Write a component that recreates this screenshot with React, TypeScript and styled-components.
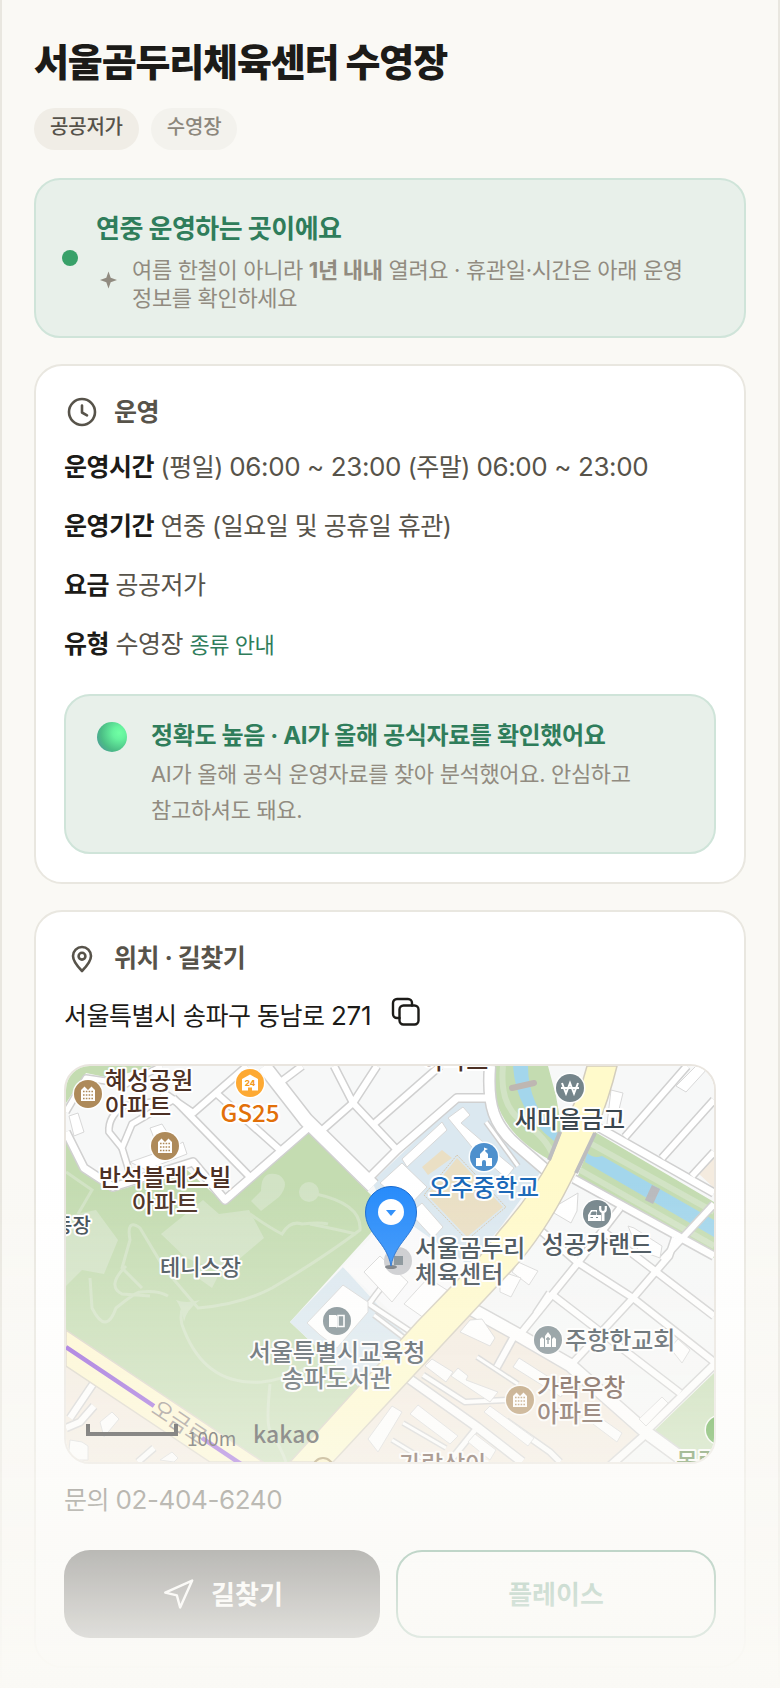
import React from 'react';
import styled, { createGlobalStyle } from 'styled-components';

const GlobalStyle = createGlobalStyle`
  *, *::before, *::after { box-sizing: border-box; }
  body {
    margin: 0;
    background: #faf9f5;
    color: #1c1b18;
    font-family: Inter, "Noto Sans CJK KR", sans-serif;
    font-size: 25px;
    letter-spacing: -0.02em;
    word-break: keep-all;
  }
  h1, h2, p, ul { margin: 0; padding: 0; font-size: inherit; }
  ul { list-style: none; }
  button { font-family: inherit; cursor: pointer; }
`;

const Page = styled.main`
  min-height: 100vh;
  padding: 38px 32px 18px;
  border: solid #e9e7e0;
  border-width: 0 2px;
`;

const Title = styled.h1`
  font-size: 38px;
  line-height: 48px;
  font-weight: 800;
  letter-spacing: -0.03em;
`;

const Chips = styled.ul`
  display: flex;
  gap: 12px;
  margin: 22px 0 28px;
`;

const Chip = styled.li<{ $soft?: boolean }>`
  padding: 4px 16px 8px;
  border-radius: 21px;
  font-size: 20px;
  line-height: 30px;
  font-weight: 500;
  letter-spacing: -0.01em;
  color: ${(p) => (p.$soft ? '#8c877c' : '#56524a')};
  background: ${(p) => (p.$soft ? '#f3f2ed' : '#f0ede6')};
`;

const Notice = styled.section`
  display: flex;
  align-items: center;
  gap: 18px;
  padding: 24px 26px;
  border: 2px solid #cfe4d9;
  border-radius: 26px;
  background: #e8f0ea;
`;

const Dot = styled.span`
  flex: none;
  width: 16px;
  height: 16px;
  border-radius: 50%;
  background: #38a169;
`;

const NoticeTitle = styled.p`
  margin-bottom: 2px;
  font-size: 26px;
  line-height: 50px;
  font-weight: 700;
  color: #2f7d5b;
`;

const NoticeText = styled.div`
  display: flex;
  gap: 12px;
  font-size: 22px;
  line-height: 28px;
  letter-spacing: -0.015em;
  color: #918b80;
  svg { flex: none; margin-top: 12px; }
`;

const Card = styled.section`
  margin-top: 26px;
  padding: 28px;
  border: 2px solid #e9e7e0;
  border-radius: 28px;
  background: #fff;
`;

const CardTitle = styled.h2`
  display: flex;
  align-items: center;
  gap: 14px;
  line-height: 36px;
  font-weight: 700;
  color: #57534a;
`;

const Facts = styled.ul`
  display: flex;
  flex-direction: column;
  gap: 20px;
  margin: 18px 0 29px;
  line-height: 39px;
  color: #57534a;
  b { color: #1c1b18; }
`;

/* Figures are set slightly larger than the Hangul around them. */
const Figures = styled.span`
  font-size: 26px;
  line-height: 1;
  letter-spacing: -0.015em;
`;

const GuideLink = styled.a`
  font-size: 22px;
  color: #2f7d5b;
  text-decoration: none;
`;

const Accuracy = styled.div`
  display: flex;
  gap: 24px;
  padding: 22px 31px 24px;
  border: 2px solid #cfe4d9;
  border-radius: 26px;
  background: #e8f0ea;
  line-height: 36px;
`;

const Ball = styled.span`
  flex: none;
  width: 30px;
  height: 30px;
  margin-top: 4px;
  border-radius: 50%;
  background: radial-gradient(circle at 74% 36%, #70ffa4 0%, #66f29e 22%, #4bbd85 62%, #4f95a0 92%);
`;

const AccuracyTitle = styled.p`
  margin-bottom: 2px;
  font-size: 24px;
  font-weight: 700;
  letter-spacing: -0.015em;
  color: #2f7d5b;
`;

const AccuracyText = styled.p`
  font-size: 22px;
  letter-spacing: -0.015em;
  color: #918b80;
`;

const Address = styled.div`
  display: flex;
  align-items: center;
  gap: 20px;
  margin: 20px 0 28px;
  line-height: 40px;
`;

const CopyButton = styled.button`
  display: flex;
  padding: 0 0 8px;
  border: 0;
  background: none;
  color: #1c1b18;
`;

const MapFrame = styled.div`
  height: 400px;
  overflow: hidden;
  border: 2px solid #e9e5df;
  border-radius: 26px;
  svg { display: block; width: 100%; height: 100%; }
`;

const Phone = styled.p`
  margin: 16px 0 30px;
  line-height: 40px;
  color: #57534a;
`;

const Actions = styled.div`
  display: flex;
  gap: 16px;
`;

const Action = styled.button<{ $primary?: boolean }>`
  flex: 1 1 0;
  display: flex;
  align-items: center;
  justify-content: center;
  gap: 16px;
  height: 88px;
  padding: 0;
  border: ${(p) => (p.$primary ? '0' : '2px solid #2f7d5b')};
  border-radius: 26px;
  font-size: 26px;
  font-weight: 700;
  color: ${(p) => (p.$primary ? '#fff' : '#2f7d5b')};
  background: ${(p) => (p.$primary ? '#1c1b18' : '#fff')};
`;

const ActionLabel = styled.span`
  padding-bottom: 4px;
`;

const BottomFade = styled.div`
  position: fixed;
  inset: auto 0 0;
  height: 30vh;
  pointer-events: none;
  background: linear-gradient(rgba(250, 249, 245, 0), rgba(250, 249, 245, 0.98));
`;

const ClockIcon = () => (
  <svg width="36" height="36" viewBox="0 0 36 36" fill="none" stroke="currentColor" strokeWidth="2.6" strokeLinecap="round" strokeLinejoin="round" aria-hidden="true">
    <circle cx="18" cy="18" r="13" />
    <path d="M18 11.5v7l5 2.8" />
  </svg>
);

const PlaceIcon = () => (
  <svg width="36" height="36" viewBox="0 0 36 36" fill="none" stroke="currentColor" strokeWidth="2.6" strokeLinejoin="round" aria-hidden="true">
    <path d="M18 31c-4.200-4.300-9-9.300-9-15a9 9 0 0 1 18 0c0 5.700-4.800 10.700-9 15z" />
    <circle cx="18" cy="16.200" r="3.400" />
  </svg>
);

const SparkIcon = () => (
  <svg width="24" height="24" viewBox="0 0 24 24" fill="currentColor" aria-hidden="true">
    <path d="M12.500 3.500l2.200 6.300 6.300 2.200-6.300 2.200-2.200 6.300-2.200-6.300-6.300-2.200 6.300-2.200z" />
  </svg>
);

const CopyIcon = () => (
  <svg width="30" height="30" viewBox="0 0 30 30" fill="none" stroke="currentColor" strokeWidth="2.400" strokeLinecap="round" strokeLinejoin="round" aria-hidden="true">
    <rect x="8.500" y="8.500" width="19" height="19" rx="4" />
    <path d="M8.500 21H6a4 4 0 0 1-4-4V6a4 4 0 0 1 4-4h11a4 4 0 0 1 4 4v2.500" />
  </svg>
);

const NavigateIcon = () => (
  <svg width="34" height="34" viewBox="0 0 24 24" fill="none" stroke="currentColor" strokeWidth="1.700" strokeLinejoin="round" aria-hidden="true">
    <path d="M3 11 22 2.500 13.500 21.500 11.200 13z" />
  </svg>
);

/* Street centre lines with their widths. */
const streets: [string, number][] = [
  ['M198 0 L240 54 L307 120', 13],
  ['M244 60 L159 134 L127 96 L47 121 L18 102 L0 66', 7],
  ['M0 46 L20 12 L60 18 L96 0', 5],
  ['M107 32 L184 111', 6],
  ['M96 26 L127 47 L181 0', 6],
  ['M150 27 L214 84', 6],
  ['M212 18 L236 0', 6],
  ['M107 34 L66 58 L56 82 L64 108', 5],
  ['M100 34 L58 40 Q42 50 43 66 L56 82', 5],
  ['M268 0 L287 37 L331 84', 6],
  ['M311 0 L287 37 L254 66', 6],
  ['M374 0 L309 57', 6],
  ['M301 114 L331 84 L391 32 L424 32', 7],
  ['M424 0 C421 40 428 60 452 80 L480 104', 10],
  ['M420 56 L452 100', 3],
  ['M530 60 L648 127', 7],
  ['M508 113 L648 190', 7],
  ['M559 71 L621 0', 6],
  ['M596 92 L648 34', 6],
  ['M626 110 L648 86', 6],
  ['M400 240 L447 266 L504 299 L581 367 L626 400', 12],
  ['M456 266 L511 198 L554 142', 6],
  ['M504 300 L567 232 L603 190 L609 172', 6],
  ['M474 164 L511 196 L567 232 L652 299', 6],
  ['M484 227 L614 327', 6],
  ['M470 248 L484 227', 6],
  ['M534 163 L584 201 L648 250', 6],
  ['M652 295 L581 364', 7],
  ['M596 194 L648 138', 6],
  ['M581 367 L544 400', 7],
  ['M345 266 L303 238 Q330 200 336 208', 4],
  ['M342 312 L411 361 L456 396', 8],
  ['M357 309 L399 336 L441 334', 4],
  ['M409 364 L380 400', 5],
  ['M447 272 L431 301', 6],
  ['M411 291 L452 318', 3],
  ['M440 355 L484 386 L494 396', 5],
  ['M337 357 L380 382', 3],
  ['M326 374 L362 396', 3],
  ['M308 249 L346 278', 3],
  ['M27 318 L4 352 M0 362 L14 356 L28 340', 6],
  ['M72 396 L88 382', 5],
];

const buildings = [
  '336,93 376,56 381,64 341,101',
  '314,117 336,97 361,121 342,141',
  '356,137 377,161 367,172 344,147',
  '382,52 397,41 404,49 395,57 424,82 448,102 440,112 410,86',
  '277,219 302,236 302,246 271,282 254,269 241,257',
  '3,50 12,47 18,66 8,70',
  '84,62 96,58 101,66 88,72',
  '64,96 110,80 117,76 121,88 80,104',
  '545,24 557,27 549,60 541,58',
  '610,20 630,0 642,2 620,26',
  '490,140 512,127 511,145 505,157 488,147',
  '562,160 568,162 596,180 594,192 572,184',
  '452,196 472,205 463,219 446,206',
  '434,205 455,212 445,231 434,226',
  '394,266 404,254 416,253 429,272 424,280',
  '298,206 314,190 342,216 326,236',
  '338,238 362,212 384,226 358,252',
  '359,300 366,293 387,306 380,316',
  '385,310 392,302 402,310 400,314 432,326 424,336',
  '344,348 352,339 392,370 384,378',
  '302,373 326,340 336,346 312,386',
  '447,301 453,292 500,322 495,331',
  '527,358 532,350 556,367 551,376',
  '418,346 424,340 468,372 462,380',
  '573,353 596,331 602,337 580,360',
  '604,282 612,273 624,284 616,297',
  '402,376 409,368 430,384 424,394',
  '34,356 46,346 53,353 38,371',
  '94,394 106,386 112,392 108,396',
  '4,374 16,376 22,380 22,394 2,394',
];

const ParkPaths = () => (
  <>
    <g fill="#d2e3c5">
      <path d="M95 168l42-34 16 14 30-4 15 28-40 34-38-14zM0 150l30-6 22 30-14 34-22-4-16 16z" />
      <circle cx="243" cy="126" r="10" />
      <path d="M195 125q0-22 18-16 12 8 0 22l-18 14-10-10z" />
      <path d="M132 212l22-6-8 16z" />
    </g>
    <g fill="none" stroke="#d2e3c5" strokeWidth="3">
      <path d="M0 106l26 18-14 24M184 148q20 14 32 20 8-14 20-10 18-2 26 0M250 128q46 10 44 36-40 30-88 58-30 16-74 20l-34-40-24-40q-14-10-10 12l-8 28 20 20" />
      <path d="M24 212l2 30q14 28 24 0 20-16 24-16 18-2 28 4M60 200q-20 20-4 28l28 2" />
      <path d="M118 238q-6 14 0 26 22 56 78 52 20-2 44-14M204 318q-4 40 0 46 12 20 16 32M244 158q30 6 46 10" />
    </g>
    <path d="M110 234q10 4 24 0-14 10-16 22-2-14-8-22z" fill="#d2e3c5" />
  </>
);

type PoiProps = { x: number; y: number; color: string; children?: React.ReactNode };
const Poi = ({ x, y, color, children }: PoiProps) => (
  <g transform={`translate(${x} ${y})`}>
    <circle r="15.500" fill="#fff" opacity="0.9" />
    <circle r="14" fill={color} />
    <g fill="#fff">{children}</g>
  </g>
);

const Apartment = ({ x, y }: { x: number; y: number }) => (
  <Poi x={x} y={y} color="#ae8a5a">
    <path d="M-7 7V-4l3.500-3.500L0-4l3.500-3.500L7-4V7z" />
    <path d="M-5-2.500H5M-5 1H5M-5 4.500H5" stroke="#ae8a5a" strokeWidth="1.600" strokeDasharray="1.600 1.200" />
  </Poi>
);

type LabelProps = { x: number; y: number; lines: string[]; color?: string; size?: number; middle?: boolean };
const Label = ({ x, y, lines, color = '#3b474f', size = 24, middle }: LabelProps) => (
  <text y={y} fill={color} fontSize={size} textAnchor={middle ? 'middle' : 'start'}>
    {lines.map((line, i) => (
      <tspan key={line} x={x} dy={i ? 26 : 0}>{line}</tspan>
    ))}
  </text>
);

const BROWN = '#4c3024';

const LocationMap = () => (
  <svg viewBox="0 0 648 396" preserveAspectRatio="xMidYMid slice" role="img" aria-label="서울곰두리체육센터 지도">
    <rect width="648" height="396" fill="#f7f8f8" />
    <path d="M411 241L447 272 514 307 572 369 556 396H267L334 324zM0 300L27 317 144 396H0zM648 92l-16 15 16 15z" fill="#f4ebdf" />
    <path d="M0 0H87L44 12 20 7 0 37z" fill="#c4dcb1" />
    <path d="M0 74L16 104 46 126 121 104 159 138 242 66 307 131 311 160 224 256 294 322 229 396H197L0 264z" fill="#c4dcb1" />
    <ParkPaths />
    <path d="M648 307L589 364 621 394 648 396z" fill="#c4dcb1" />
    <path d="M306 116L391 35H421L440 74 476 104 434 162 405 196H370L312 128zM277 201L341 271 294 322 224 256z" fill="#dbe8f0" />
    <path d="M277 201L318 158 330 148 404 200 344 264z" fill="#fafafb" />
    <path d="M428 0H482L490 30 496 64 484 94Q440 70 430 34zM529 66L648 136V192L511 112z" fill="#c4dcb1" />
    <path d="M437 0q-4 40 20 56t30 34M522 76l126 70M514 104l134 76" fill="none" stroke="#d2e3c5" strokeWidth="6" />
    <path d="M447 0H462Q462 40 492 67L488 75Q450 46 447 0zM521 87Q528 93 536 90L648 154V171L519 96z" fill="#a3d6ec" />
    {streets.map(([d, w]) => (
      <path key={d} d={d} fill="none" stroke="#d0d0d0" strokeWidth={w + 3} strokeLinejoin="round" />
    ))}
    {streets.map(([d, w]) => (
      <path key={d} d={d} fill="none" stroke="#fff" strokeWidth={w} strokeLinejoin="round" />
    ))}
    {buildings.map((points) => (
      <polygon key={points} points={points} fill="#fff" stroke="#d8d8d8" />
    ))}
    <path d="M391 92L437 141 401 171 361 129zM376 84L386 92 362 109 356 101z" fill="#eadfc4" />
    <path d="M391 89L440 141 401 174 358 129z" fill="none" stroke="#d8c8ae" strokeDasharray="2 1" />
    <path d="M0 264L197 396H144L0 300z" fill="#fff8cf" stroke="#d8d2c4" strokeWidth="1.500" />
    <path d="M0 281L88 340M136 372L175 398" stroke="#9258da" strokeWidth="4.500" />
    <path d="M521 0H551C545 25 538 45 529 67L504 117C490 145 470 178 446 204L334 324 267 396H224L351 256 411 194 434 164C455 140 470 120 484 94L496 64C508 40 516 20 521 0z" fill="#fffacb" stroke="#d3cdbd" strokeWidth="1.500" />
    <path d="M494 66L483 94M529 67L510 107" stroke="#bdbdbf" strokeWidth="4" />
    <path d="M590 121L583 136" stroke="#b9babd" strokeWidth="9" />
    <path d="M446 22L468 17" stroke="#beb7b2" strokeWidth="6" strokeLinecap="round" />

    <g fontFamily='"Noto Sans CJK KR", sans-serif' fontWeight="500" letterSpacing="0" stroke="#fff" strokeWidth="4" strokeLinejoin="round" paintOrder="stroke">
      <text x="84" y="346" fontSize="22" fontWeight="400" fill="#8b817c" stroke="none" transform="rotate(34 84 346)">오금로</text>
      <Label x={39} y={23} lines={['혜성공원', '아파트']} color={BROWN} />
      <Label x={99} y={120} lines={['반석블레스빌', '아파트']} color={BROWN} middle />
      <Label x={184} y={56} lines={['GS25']} color="#e2700a" middle />
      <Label x={-12} y={167} lines={['동장']} size={20} />
      <Label x={94} y={209} lines={['테니스장']} size={22} />
      <Label x={356} y={3} lines={['아파트']} color={BROWN} />
      <Label x={418} y={130} lines={['오주중학교']} color="#1a68b8" middle />
      <Label x={349} y={191} lines={['서울곰두리', '체육센터']} />
      <Label x={504} y={62} lines={['새마을금고']} middle />
      <Label x={531} y={187} lines={['성공카랜드']} middle />
      <Label x={271} y={295} lines={['서울특별시교육청', '송파도서관']} middle />
      <Label x={499} y={283} lines={['주향한교회']} />
      <Label x={471} y={330} lines={['가락우창', '아파트']} color="#57382a" />
      <Label x={333} y={407} lines={['가락상아']} color="#57382a" />
      <Label x={610} y={404} lines={['목련']} color="#4c7a35" />
    </g>

    <Apartment x={22} y={28} />
    <Apartment x={99} y={80} />
    <Apartment x={454} y={334} />
    <Poi x={184} y={17} color="#fda933">
      <path d="M0-8.500L8-4V7.500H2V4.500h-4v3h-6V-4z" />
      <text y="3" fontSize="8" fontWeight="800" textAnchor="middle" fill="#f39a1c" letterSpacing="0">24</text>
    </Poi>
    <Poi x={418} y={91} color="#4e90cd">
      <path d="M-8 9V1h4v-4l4-4V-9.500l4 1.500-3 1.500V-6l3 3v4h4v8H2V5a2 2 0 0 0-4 0v4z" />
    </Poi>
    <Poi x={504} y={22} color="#75858b">
      <path d="M-8-5l4 10.500L0-5 4 5.500 8-5M-9 0H9" fill="none" stroke="#fff" strokeWidth="2" />
    </Poi>
    <Poi x={531} y={148} color="#75858b">
      <path d="M-9 7V1l3-5h6v5h4v6z" />
      <path d="M-5-2h4v2.500h-5.200zM-6.500 3.500h2.500M-1 3.500h2" fill="#75858b" stroke="#75858b" strokeWidth="1" />
      <path d="M6 7v-9" fill="none" stroke="#fff" strokeWidth="3" />
      <path d="M3.200-8v3q0 3 2.800 3t2.800-3v-3" fill="none" stroke="#fff" strokeWidth="2.200" />
    </Poi>
    <Poi x={271} y={255} color="#75858b">
      <path d="M-8-6h7l1 1V7l-1-1h-7z" />
      <path d="M1-5.500h6V5.500H1z" fill="none" stroke="#fff" strokeWidth="1.600" />
    </Poi>
    <Poi x={482} y={274} color="#75858b">
      <path d="M-8 7V-1l2-2 2 2V7zM4 7V-1l2-2 2 2V7zM-3 7V-4l3-4 3 4V7z" />
      <path d="M0-3v7M-2-1h4" stroke="#75858b" strokeWidth="1.400" />
    </Poi>
    <Poi x={654} y={364} color="#4fa236" />
    <circle cx="257" cy="402" r="10" fill="#fff3bd" stroke="#a28a53" strokeWidth="2" />

    <circle cx="332" cy="195" r="14" fill="#c9cace" />
    <path d="M328 190h9v9h-9z" fill="#7d8990" />
    <ellipse cx="325" cy="201" rx="6" ry="2" fill="#6d7278" />
    <path d="M325 200C321 176 299.500 168 299.500 146a25.500 25.500 0 0 1 51 0C350.500 168 329 176 325 200z" fill="#268bfb" stroke="#1769cf" />
    <circle cx="325" cy="146" r="13" fill="#fff" />
    <path d="M320 144h10l-5 6z" fill="#268bfb" />

    <path d="M22 358V368H110V358" fill="none" stroke="#1c1c1c" strokeWidth="4" />
    <g fontFamily='"Noto Sans CJK KR", sans-serif' fill="#2c2c2c" letterSpacing="0">
      <text x="121" y="380" fontSize="19" fontWeight="400">100m</text>
      <text x="187" y="377" fontSize="23" fontWeight="500">kakao</text>
    </g>
  </svg>
);

export default function App() {
  return (
    <>
      <GlobalStyle />
      <Page>
        <Title>서울곰두리체육센터 수영장</Title>
        <Chips>
          <Chip>공공저가</Chip>
          <Chip $soft>수영장</Chip>
        </Chips>

        <Notice>
          <Dot />
          <div>
            <NoticeTitle>연중 운영하는 곳이에요</NoticeTitle>
            <NoticeText>
              <SparkIcon />
              <p>
                여름 한철이 아니라 <b>1년 내내</b> 열려요 · 휴관일·시간은 아래 운영 정보를 확인하세요
              </p>
            </NoticeText>
          </div>
        </Notice>

        <Card>
          <CardTitle><ClockIcon />운영</CardTitle>
          <Facts>
            <li>
              <b>운영시간</b> (평일) <Figures>06:00 ~ 23:00</Figures> (주말) <Figures>06:00 ~ 23:00</Figures>
            </li>
            <li><b>운영기간</b> 연중 (일요일 및 공휴일 휴관)</li>
            <li><b>요금</b> 공공저가</li>
            <li><b>유형</b> 수영장 <GuideLink href="#types">종류 안내</GuideLink></li>
          </Facts>
          <Accuracy>
            <Ball />
            <div>
              <AccuracyTitle>정확도 높음 · AI가 올해 공식자료를 확인했어요</AccuracyTitle>
              <AccuracyText>AI가 올해 공식 운영자료를 찾아 분석했어요. 안심하고 참고하셔도 돼요.</AccuracyText>
            </div>
          </Accuracy>
        </Card>

        <Card>
          <CardTitle><PlaceIcon />위치 · 길찾기</CardTitle>
          <Address>
            <span>서울특별시 송파구 동남로 <Figures>271</Figures></span>
            <CopyButton type="button" aria-label="주소 복사"><CopyIcon /></CopyButton>
          </Address>
          <MapFrame><LocationMap /></MapFrame>
          <Phone>문의 <Figures>02-404-6240</Figures></Phone>
          <Actions>
            <Action type="button" $primary><NavigateIcon /><ActionLabel>길찾기</ActionLabel></Action>
            <Action type="button"><ActionLabel>플레이스</ActionLabel></Action>
          </Actions>
        </Card>
      </Page>
      <BottomFade />
    </>
  );
}
